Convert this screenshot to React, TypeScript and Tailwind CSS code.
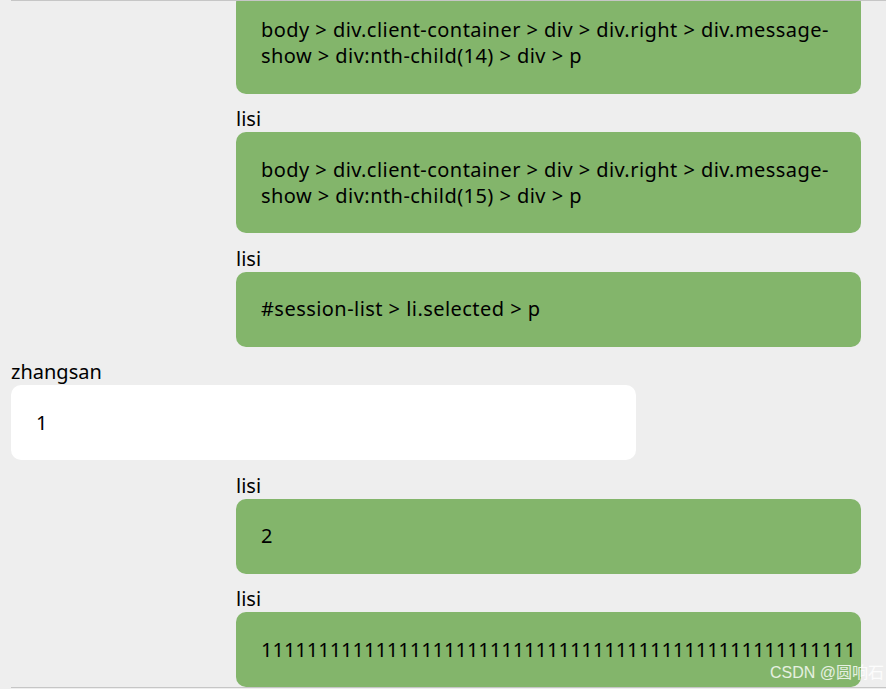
const messages = [
  { id: 1, from: 'lisi', self: true, text: 'body > div.client-container > div > div.right > div.message-show > div:nth-child(14) > div > p' },
  { id: 2, from: 'lisi', self: true, text: 'body > div.client-container > div > div.right > div.message-show > div:nth-child(15) > div > p' },
  { id: 3, from: 'lisi', self: true, text: '#session-list > li.selected > p' },
  { id: 4, from: 'zhangsan', self: false, text: '1' },
  { id: 5, from: 'lisi', self: true, text: '2' },
  { id: 6, from: 'lisi', self: true, text: '1'.repeat(52) },
];

const App = () => {
  return (
    <div className="relative w-[886px] h-[689px] bg-[#eeeeee] overflow-hidden font-['Noto_Sans','Noto_Sans_CJK_SC',sans-serif] text-[20px] leading-[26px] text-black">
      <div className="ml-[11px] h-[688px] border-y border-[#c6c6c6] overflow-hidden flex flex-col justify-end">
        <div className="w-[850px] flex flex-col">
          {messages.map((m) => (
            <div
              key={m.id}
              className={`w-[625px] mb-[12.5px] last:mb-0 ${m.self ? 'ml-[225px]' : ''}`}
            >
              <div className="h-[26px]">{m.from}</div>
              <div
                className={`rounded-[10px] px-[25px] py-[24.5px] ${
                  m.self ? 'bg-[#83b56b]' : 'bg-white'
                }`}
              >
                <p className={`break-normal whitespace-normal ${/^\d+$/.test(m.text) ? '' : 'tracking-[0.45px]'}`}>
                  {m.text}
                </p>
              </div>
            </div>
          ))}
        </div>
      </div>

      {/* Watermark */}
      <div className="absolute right-[2px] bottom-[6px] text-[16px] leading-[20px] text-white/80 font-['Liberation_Sans','Noto_Sans_CJK_SC',sans-serif]">
        CSDN @圆响石
      </div>
    </div>
  );
};

export default App;
